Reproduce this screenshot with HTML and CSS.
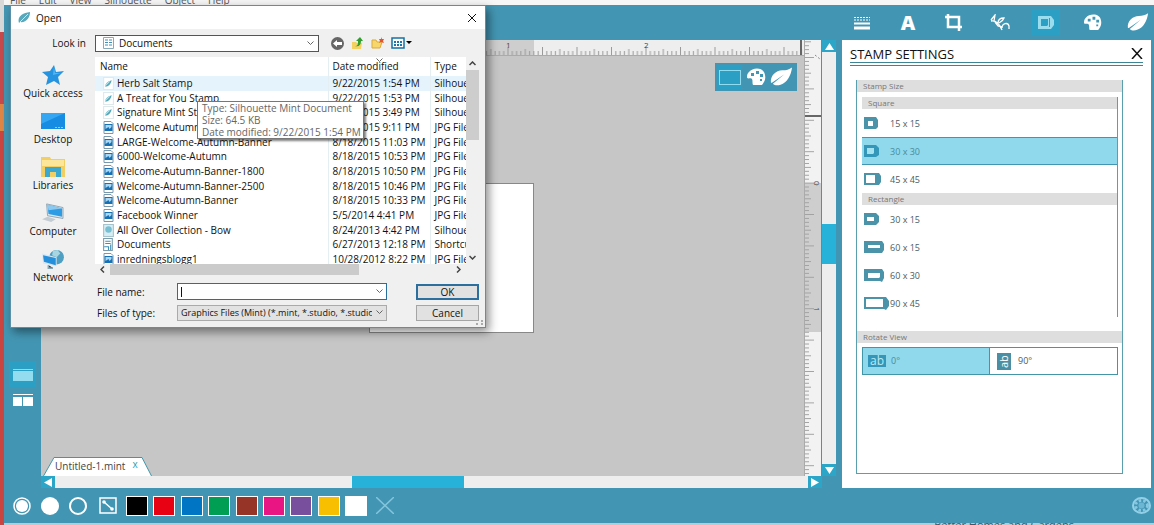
FILE: index.html
```
<!DOCTYPE html>
<html lang="en">
<head>
<meta charset="utf-8">
<title>Silhouette Studio</title>
<link rel="stylesheet" href="styles.css">
</head>
<body>
<svg class="defs" aria-hidden="true">
  <defs>
    <symbol id="leaf" viewBox="0 0 24 20"><path fill="currentColor" d="M1 16C0 9 6 3 13 3c4 0 7-1 10-3-1 8-5 16-12 18-3 1-6 1-8-1L15 7 2 16z"/></symbol>
    <symbol id="palette" viewBox="0 0 20 18"><path fill="currentColor" fill-rule="evenodd" d="M3 4c4-5 15-5 16 3 1 5-1 7-3 10H7c-1-2 0-4-1-6S1 12 1 9s1-4 2-5zm2 1v3h3V5zm5-2v3h3V3zm4 3v3h3V6zm0 5v2h2v-2z"/></symbol>
    <symbol id="picture" viewBox="0 0 10 13"><path fill="#fff" stroke="#7899ad" d="M.5.5h7l2 2v10h-9z"/><path fill="#1670b5" d="M1 3h8v7H1z"/><path fill="#a8d8f5" d="M2 4h6v2L6 8 5 6 2 8z"/></symbol>
    <symbol id="feather" viewBox="0 0 10 12"><path fill="#fff" stroke="#dfe8eb" d="M.5.5h9v11h-9z"/><path fill="#4fa6ba" d="M2 9c0-3 2-5 6-6-1 4-3 6-6 6z"/><path stroke="#b7e3ea" d="M2 8l4-4"/></symbol>
    <pattern id="hticks" width="34.5" height="15" patternUnits="userSpaceOnUse" x="17"><path stroke="#999" d="M.5 7v8M4.800 11v4M9.100 11v4M13.400 11v4M17.800 9v6M22.100 11v4M26.400 11v4M30.700 11v4"/></pattern>
    <pattern id="vticks" width="17" height="31.4" patternUnits="userSpaceOnUse" y="17"><path stroke="#a2a2a2" d="M0 .5h9M0 4.400h4M0 8.400h4M0 12.300h4M0 16.200h6M0 20.100h4M0 24h4M0 27.900h4"/></pattern>
  </defs>
</svg>
<div class="desktop">
  <div class="edge"><span class="edge-top"></span><span class="edge-red"></span><span class="edge-orange"></span><span class="edge-rest"></span></div>
  <div class="app">
    <nav class="menu"><span>File</span><span>Edit</span><span>View</span><span>Silhouette</span><span>Object</span><span>Help</span></nav>
    <header class="toolbar">
      <button class="tool" aria-label="Line style"><svg width="18" height="14" viewBox="0 0 18 14"><path stroke="#fff" stroke-dasharray="2 1" d="M1 1.500h16M1 4h16"/><path stroke="#fff" stroke-width="2" d="M1 7.500h16"/><path stroke="#fff" stroke-width="3" d="M1 12h16"/></svg></button>
      <button class="tool tool-text" aria-label="Text style">A</button>
      <button class="tool" aria-label="Crop"><svg width="20" height="17" viewBox="0 0 20 17"><path fill="none" stroke="#fff" stroke-width="2.500" d="M4 0v13h14M1 3h14v14"/></svg></button>
      <button class="tool" aria-label="Flourish"><svg width="20" height="17" viewBox="0 0 20 17"><path fill="none" stroke="#fff" stroke-width="1.300" d="M1 6l4-5-1 6M1 7c6-1 9 4 11 9M8 9c0-3 2-5 6-5-1 3-3 4-5 5M12 14c0-5 6-6 7-2v3M5 8l3 4 4 1"/></svg></button>
      <button class="tool tool-on" aria-label="Stamp settings"><svg width="16" height="13" viewBox="0 0 16 13"><path fill="#9addef" fill-rule="evenodd" d="M0 0h13l3 4v5l-3 4H0zM3 3v7h6l1-1V3z"/><path stroke="#2c9fc4" d="M11.500 2v9"/></svg></button>
      <button class="tool" aria-label="Colors"><svg width="19" height="17"><use href="#palette"/></svg></button>
      <button class="tool" aria-label="Mint"><svg width="22" height="19"><use href="#leaf"/></svg></button>
    </header>
    <div class="main">
      <aside class="rail">
        <button class="view view-on" aria-label="Single view"><svg width="20" height="13" viewBox="0 0 20 13"><path fill="#93dbef" d="M0 1h20v1H0zM0 3h20v10H0z"/></svg></button>
        <button class="view" aria-label="Split view"><svg width="20" height="12" viewBox="0 0 20 12"><path fill="#fff" d="M0 0h20v1H0zM0 3h9v9H0zM10 3h10v9H10z"/></svg></button>
      </aside>
      <section class="workspace">
        <div class="stage">
          <div class="drawing">
            <svg class="hruler" width="100%" height="15"><path fill="#eee" d="M0 0h2000v15H0z"/><path fill="#cecece" d="M328 0h164v15H328z"/><rect width="100%" height="15" fill="url(#hticks)"/><path stroke="#666" stroke-width="2" d="M759 0v15"/><text x="464" y="8">1</text><text x="602" y="8">2</text></svg>
            <div class="canvas">
              <div class="sheet"></div>
              <div class="quick">
                <button class="quick-box" aria-label="Page"><span></span></button>
                <svg width="20" height="18"><use href="#palette"/></svg>
                <svg width="23" height="20"><use href="#leaf"/></svg>
              </div>
              <div class="tab"><svg width="109" height="20" viewBox="0 0 109 20"><path fill="#fff" stroke="#4396a8" d="M.5 20L11 1.500h88L108.500 20"/></svg><span>Untitled-1.mint</span><button class="tab-close" aria-label="Close tab">x</button></div>
            </div>
          </div>
          <svg class="vruler" width="17" height="100%"><path fill="#f2f2f2" d="M0 0h17v2000H0z"/><path fill="#cecece" d="M0 143h17v149H0z"/><rect width="17" height="100%" fill="url(#vticks)"/><path stroke="#666" stroke-width="2" d="M0 76h17"/><text transform="translate(9 141) rotate(90)">0</text><text transform="translate(9 267) rotate(90)">1</text><path stroke="#888" stroke-dasharray="2 2" d="M10 15l5 4"/></svg>
          <div class="vscroll"><button class="arrow" aria-label="Scroll up"><svg width="9" height="7"><path d="M4.500 0L9 7H0z"/></svg></button><span class="vthumb"></span><button class="arrow" aria-label="Scroll down"><svg width="9" height="7"><path d="M0 0h9L4.500 7z"/></svg></button></div>
        </div>
        <div class="hscroll"><button class="arrow" aria-label="Scroll left"><svg width="8" height="9"><path d="M8 0v9L0 4.500z"/></svg></button><span class="hthumb"></span><button class="arrow" aria-label="Scroll right"><svg width="8" height="9"><path d="M0 0v9l8-4.500z"/></svg></button></div>
      </section>
      <aside class="panel">
        <div class="panel-head"><h1>STAMP SETTINGS</h1><button class="panel-close" aria-label="Close panel"><svg width="12" height="11" viewBox="0 0 12 11"><path stroke="#111" stroke-width="1.500" d="M1 0l10 11M11 0L1 11"/></svg></button></div>
        <div class="settings">
          <h2>Stamp Size</h2>
          <div class="sizes">
            <h3>Square</h3>
            <button class="size"><svg width="26" height="13"><path fill-rule="evenodd" d="M0 0h12l2 3v7l-2 2H0zM4 4v5h5V4z"/></svg>15 x 15</button>
            <button class="size size-on"><svg width="26" height="13"><path fill-rule="evenodd" d="M0 0h12l3 3v7l-3 2H0z"/><path class="hole" d="M3 3h7v5l-1 1H3z"/></svg>30 x 30</button>
            <button class="size"><svg width="26" height="13"><path fill-rule="evenodd" d="M0 0h15l2 3v6l-2 3H0zM2 2v8h9V2z"/></svg>45 x 45</button>
            <h3>Rectangle</h3>
            <button class="size"><svg width="26" height="13"><path fill-rule="evenodd" d="M0 0h12l3 3v6l-3 3H0zM3 4v4h7V4z"/></svg>30 x 15</button>
            <button class="size"><svg width="26" height="13"><path fill-rule="evenodd" d="M0 0h18l2 3v6l-2 3H0zM4 4v3h12V4z"/></svg>60 x 15</button>
            <button class="size"><svg width="26" height="13"><path fill-rule="evenodd" d="M0 0h18l2 3v6l-2 4-2-1H0zM4 4v5h11l1-1V4z"/></svg>60 x 30</button>
            <button class="size"><svg width="26" height="13"><path fill-rule="evenodd" d="M0 0h22l3 4v5l-3 4-2-1H0zM2 2v8h17V2z"/></svg>90 x 45</button>
          </div>
          <h2>Rotate View</h2>
          <div class="rotate">
            <button class="angle angle-on"><span class="ab">ab</span>0°</button>
            <button class="angle"><span class="ab ab-turned">ab</span>90°</button>
          </div>
        </div>
      </aside>
    </div>
    <footer class="bottom">
      <div class="fills">
        <svg width="18" height="18" viewBox="0 0 18 18"><circle cx="9" cy="9" r="8" fill="none" stroke="#fff" stroke-width="1.500"/><circle cx="9" cy="9" r="6" fill="#fff"/></svg>
        <svg width="18" height="18" viewBox="0 0 18 18"><circle cx="9" cy="9" r="9" fill="#fff"/></svg>
        <svg width="18" height="18" viewBox="0 0 18 18"><circle cx="9" cy="9" r="8" fill="none" stroke="#fff" stroke-width="2"/></svg>
      </div>
      <svg class="line-tool" width="18" height="17" viewBox="0 0 18 17"><path fill="none" stroke="#fff" stroke-width="1.500" d="M1 1h16v15H1zM5 5l8 7"/><circle cx="5" cy="5" r="1.800" fill="#fff"/><circle cx="13" cy="12" r="1.800" fill="#fff"/></svg>
      <div class="swatches">
        <button class="swatch black" aria-label="Black"></button><button class="swatch red" aria-label="Red"></button><button class="swatch blue" aria-label="Blue"></button><button class="swatch green" aria-label="Green"></button><button class="swatch brown" aria-label="Brown"></button><button class="swatch pink" aria-label="Pink"></button><button class="swatch purple" aria-label="Purple"></button><button class="swatch yellow" aria-label="Yellow"></button><button class="swatch white" aria-label="White"></button>
      </div>
      <svg class="none" width="18" height="17" viewBox="0 0 18 17"><path stroke="#83c5dc" stroke-width="1.500" d="M0 0l18 17M18 0L0 17"/></svg>
      <button class="gear" aria-label="Preferences"><svg width="19" height="17" viewBox="0 0 19 17"><ellipse cx="9.500" cy="8.500" rx="8.500" ry="7.500" fill="none" stroke="#93d0e8" stroke-width="2"/><ellipse cx="9.500" cy="8.500" rx="6" ry="5" fill="none" stroke="#86c8e2" stroke-width="3" stroke-dasharray="2.500 2"/><circle cx="9.500" cy="8.500" r="3" fill="#6db6d3"/></svg></button>
    </footer>
    <div class="behind"><span>Better Homes and Gardens</span></div>
  </div>
</div>

<section class="dialog" role="dialog" aria-label="Open">
  <header class="title"><svg class="title-icon" width="12" height="12" viewBox="0 0 12 12"><path fill="#58a9bd" d="M1 11C-1 5 4 1 12 0c0 6-4 11-10 10z"/><path stroke="#c4e9f0" d="M2 10l8-8"/></svg><span>Open</span><button class="x" aria-label="Close"><svg width="8" height="8" viewBox="0 0 8 8"><path stroke="#111" d="M0 0l8 8M8 0L0 8"/></svg></button></header>
  <div class="lookin">
    <span class="look-label">Look in</span>
    <button class="combo"><svg width="11" height="12" viewBox="0 0 11 12"><path fill="#fff" stroke="#8aa9b8" d="M.5.5h10v11H.5z"/><path stroke="#3e8fb8" d="M2 3h3M6 3h3M2 5.500h3M6 5.500h3M2 8h3M6 8h3"/></svg><span>Documents</span><svg class="chev" width="7" height="5" viewBox="0 0 7 5"><path d="M.5.5l3 3 3-3"/></svg></button>
    <div class="nav-icons">
      <svg width="13" height="13" viewBox="0 0 13 13"><circle cx="6.500" cy="6.500" r="6.500" fill="#666"/><path fill="#fff" d="M2 6.500L6 3v2h5v3H6v2z"/></svg>
      <svg width="13" height="13" viewBox="0 0 13 13"><path fill="#f5d161" d="M1 5h4l1 1h5l-1 6H1z"/><path fill="#2f9e2c" d="M4 9c3 0 3-2 3-5H5l4-4 3 4h-2c0 4-2 6-6 5z"/></svg>
      <svg width="13" height="13" viewBox="0 0 13 13"><path fill="#f7d66c" stroke="#dba93c" d="M1 11V3h4l1 2h5l-2 6z"/><path fill="#e5532d" d="M10 0l1 2 2 0-1 2 1 2-3-1-2 1 1-2-1-2h2z"/></svg>
      <svg width="21" height="12" viewBox="0 0 21 12"><path fill="#fff" stroke="#1571a4" stroke-width="1.500" d="M1 1h12v10H1z"/><path fill="#1d75a8" d="M3 4h2v2H3zM6 4h2v2H6zM9 4h2v2H9zM3 7h2v2H3zM6 7h2v2H6zM9 7h2v2H9z"/><path d="M15 4h6l-3 3z"/></svg>
    </div>
  </div>
  <div class="body">
    <nav class="places">
      <a class="place" href="#"><svg width="22" height="20" viewBox="0 0 22 20"><path fill="#2593df" d="M12 0l2 7 8-1-6 6 2 8-6-4-8 4 2-8-6-5 8-1z"/><path fill="#56b5f0" d="M12 2l1 6 6 0-8 2z"/></svg><span>Quick access</span></a>
      <a class="place" href="#"><svg width="24" height="20" viewBox="0 0 24 20"><path fill="#168de2" d="M0 2h24v16H0z"/><path fill="#35a7f2" d="M0 2h24L0 13z"/><path stroke="#8bcdf6" stroke-dasharray="2 1" d="M14 16.500h9"/></svg><span>Desktop</span></a>
      <a class="place" href="#"><svg width="24" height="20" viewBox="0 0 24 20"><path fill="#f1cf64" d="M0 0h9l1 2h14v18H0z"/><path fill="#fbe69a" d="M1 3h22v6H1z"/><path fill="#3ba9cf" d="M4 10h16v10h-5v-5H9v5H4z"/></svg><span>Libraries</span></a>
      <a class="place" href="#"><svg width="24" height="22" viewBox="0 0 24 22"><path fill="#dceaf2" stroke="#8ba0ad" d="M5 1l18 4v12L6 14z"/><path fill="#2d9ce5" d="M6 2l16 4v9L7 12z"/><path fill="#8dc9ef" d="M6 2l16 4L7 8z"/><path fill="#c3ccd2" d="M0 18l6-3 9 3-5 3z"/></svg><span>Computer</span></a>
      <a class="place" href="#"><svg width="24" height="22" viewBox="0 0 24 22"><circle cx="16" cy="9" r="8" fill="#4f9fc2"/><path fill="#a8d5df" d="M12 2l5-1 3 4-4 4-5-2z"/><path fill="#d4e7f3" d="M0 5l16 4v10L1 16z"/><path fill="#268fdc" d="M1 7l14 3v8L2 14z"/><path stroke="#87a6b6" stroke-width="2" d="M7 18v3l5 0"/></svg><span>Network</span></a>
    </nav>
    <div class="content">
      <div class="browser">
        <div class="list">
          <table>
            <colgroup><col class="c-name"><col class="c-date"><col class="c-type"></colgroup>
            <thead><tr><th>Name</th><th>Date modified</th><th>Type</th></tr></thead>
            <tbody>
              <tr class="hot"><td><svg><use href="#feather"/></svg>Herb Salt Stamp</td><td>9/22/2015 1:54 PM</td><td>Silhouette</td></tr>
              <tr><td><svg><use href="#feather"/></svg>A Treat for You Stamp</td><td>9/22/2015 1:53 PM</td><td>Silhouette</td></tr>
              <tr><td><svg><use href="#feather"/></svg>Signature Mint Stamp</td><td>9/22/2015 3:49 PM</td><td>Silhouette</td></tr>
              <tr><td><svg><use href="#picture"/></svg>Welcome Autumn</td><td>8/18/2015 9:11 PM</td><td>JPG File</td></tr>
              <tr><td><svg><use href="#picture"/></svg>LARGE-Welcome-Autumn-Banner</td><td>8/18/2015 11:03 PM</td><td>JPG File</td></tr>
              <tr><td><svg><use href="#picture"/></svg>6000-Welcome-Autumn</td><td>8/18/2015 10:53 PM</td><td>JPG File</td></tr>
              <tr><td><svg><use href="#picture"/></svg>Welcome-Autumn-Banner-1800</td><td>8/18/2015 10:50 PM</td><td>JPG File</td></tr>
              <tr><td><svg><use href="#picture"/></svg>Welcome-Autumn-Banner-2500</td><td>8/18/2015 10:46 PM</td><td>JPG File</td></tr>
              <tr><td><svg><use href="#picture"/></svg>Welcome-Autumn-Banner</td><td>8/18/2015 10:33 PM</td><td>JPG File</td></tr>
              <tr><td><svg><use href="#picture"/></svg>Facebook Winner</td><td>5/5/2014 4:41 PM</td><td>JPG File</td></tr>
              <tr><td><svg viewBox="0 0 10 12"><path fill="#d8edf3" stroke="#a4c3cd" d="M.5.5h9v11h-9z"/><circle cx="5" cy="5" r="3" fill="#77bfd2"/></svg>All Over Collection - Bow</td><td>8/24/2013 4:42 PM</td><td>Silhouette</td></tr>
              <tr><td><svg viewBox="0 0 10 12"><path fill="#fff" stroke="#7b9bad" d="M.5.5h8v11h-8z"/><path fill="none" stroke="#3e8fb8" d="M2 3h5M2 5h5M1 8h4v3M7 6v5"/></svg>Documents</td><td>6/27/2013 12:18 PM</td><td>Shortcut</td></tr>
              <tr><td><svg><use href="#picture"/></svg>inredningsblogg1</td><td>10/28/2012 8:22 PM</td><td>JPG File</td></tr>
            </tbody>
          </table>
          <svg class="sort" width="7" height="4" viewBox="0 0 7 4"><path d="M.5.5l3 3 3-3"/></svg>
        </div>
        <div class="list-v"><svg width="7" height="5" viewBox="0 0 7 5"><path d="M.5 4l3-3 3 3"/></svg><span></span><svg width="7" height="5" viewBox="0 0 7 5"><path d="M.5 1l3 3 3-3"/></svg></div>
      </div>
      <div class="list-h"><svg width="5" height="7" viewBox="0 0 5 7"><path d="M4 .5l-3 3 3 3"/></svg><span></span><svg width="5" height="7" viewBox="0 0 5 7"><path d="M1 .5l3 3-3 3"/></svg></div>
      <form class="form">
        <label for="fname">File name:</label>
        <div class="field"><input id="fname" type="text" value=""><i class="caret"></i><svg class="chev" width="7" height="5" viewBox="0 0 7 5"><path d="M.5.5l3 3 3-3"/></svg></div>
        <button type="button" class="btn ok">OK</button>
        <label for="ftype">Files of type:</label>
        <div class="field"><select id="ftype"><option>Graphics Files (Mint) (*.mint, *.studio, *.studio3, *.gsd)</option></select><svg class="chev" width="7" height="5" viewBox="0 0 7 5"><path d="M.5.5l3 3 3-3"/></svg></div>
        <button type="button" class="btn">Cancel</button>
      </form>
    </div>
  </div>
  <div class="grip"></div>
  <div class="tip" role="tooltip">Type: Silhouette Mint Document<br>Size: 64.5 KB<br>Date modified: 9/22/2015 1:54 PM</div>
</section>
</body>
</html>
```
FILE: styles.css
```
* { box-sizing: border-box; }
body { margin: 0; font: 10px/12px "Open Sans", "Noto Sans", sans-serif; color: #111; overflow: hidden; }
button { margin: 0; padding: 0; border: 0; background: none; font: inherit; color: inherit; }
h1, h2, h3 { margin: 0; font-weight: 400; }
svg { display: block; flex: none; }
.defs { position: absolute; width: 0; height: 0; }

.desktop { display: flex; height: 100vh; background: #e8edf0; }
.edge { display: flex; flex-direction: column; width: 4px; }
.edge-top { height: 32px; background: #d8d8d8; }
.edge-red { height: 72px; background: #c44a4c; }
.edge-orange { height: 27px; background: #dd8544; }
.edge-rest { flex: 1; background: #c94541; }
.app { flex: 1; min-width: 0; display: flex; flex-direction: column; background: #4396b3; }

.menu { display: flex; align-items: flex-end; gap: 13px; height: 5px; padding-left: 6px; background: #f6f6f6; overflow: hidden; color: #555; font-size: 10px; line-height: 9px; }
.toolbar { display: flex; justify-content: flex-end; align-items: center; gap: 18px; height: 35px; padding-right: 2px; color: #fff; }
.tool { display: flex; align-items: center; justify-content: center; width: 28px; height: 25px; }
.tool-text { font-size: 20px; font-weight: 800; line-height: 24px; }
.tool-on { background: #2c9fc4; }

.main { flex: 1; min-height: 0; display: flex; padding-right: 3px; }
.rail { display: flex; flex-direction: column; align-items: center; width: 37px; padding-top: 322px; }
.view { display: flex; align-items: center; justify-content: center; width: 27px; height: 25px; }
.view-on { background: #2c9fc4; }
.workspace { flex: 1; min-width: 0; display: flex; flex-direction: column; }
.stage { flex: 1; min-height: 0; display: flex; }
.drawing { flex: 1; min-width: 0; display: flex; flex-direction: column; background: #c6c6c6; border-left: 1px solid #a9d2df; }
.hruler text, .vruler text { font-size: 8px; fill: #444; }
.canvas { flex: 1; position: relative; border-top: 1px solid #aaa; overflow: hidden; }
.vruler { border-left: 1px solid #aaa; }
.sheet { position: absolute; left: 327px; top: 127px; width: 165px; height: 150px; background: #fff; border: 1px solid #888; }
.quick { position: absolute; right: 7px; top: 7px; display: flex; align-items: center; gap: 4px; height: 28px; padding: 0 4px 0 3px; background: #4396b3; color: #fff; }
.quick-box { display: flex; align-items: center; justify-content: center; width: 24px; height: 24px; background: #2c9fc4; }
.quick-box span { width: 22px; height: 15px; border: 1px solid #93dbef; }
.tab { position: absolute; left: 1px; bottom: 0; display: flex; align-items: center; width: 109px; height: 20px; padding-left: 12px; color: #444; }
.tab svg { position: absolute; left: 0; top: 0; }
.tab span { position: relative; }
.tab-close { position: relative; margin-left: 7px; line-height: 8px; padding-bottom: 4px; color: #2c9fb4; }
.vscroll { display: flex; flex-direction: column; justify-content: space-between; width: 15px; margin-right: 6px; background: #eee; border-left: 1px solid #4396b3; }
.hscroll { display: flex; justify-content: space-between; height: 12px; margin-right: 20px; background: #eee; }
.arrow { display: flex; align-items: center; justify-content: center; width: 14px; height: 12px; background: #2ba6c9; }
.arrow path { fill: #fff; }
.vthumb { height: 40px; margin-bottom: 28px; background: #27b2da; }
.hthumb { width: 112px; margin-right: 48px; background: #27b2da; }

.panel { display: flex; flex-direction: column; width: 309px; padding: 5px 8px 14px; background: #fff; }
.panel-head { display: flex; align-items: center; justify-content: space-between; height: 21px; border-bottom: 4px double #3f8494; }
.panel-head h1 { font-size: 13px; line-height: 16px; color: #111; }
.settings { flex: 1; width: 267px; margin: 14px 0 0 6px; border: 1px solid #5a9fae; border-top: 0; color: #68777c; }
.settings h2, .settings h3 { font-size: 8px; line-height: 12px; height: 12px; padding-left: 6px; background: #dedede; color: #777; }
.sizes { margin: 5px 4px 14px 5px; border-right: 1px solid #5a9fae; }
.size { display: flex; align-items: center; width: 100%; height: 28px; padding: 1px 0 0 2px; font-size: 9px; font-weight: 500; color: #4c5b61; }
.size svg { fill: #4a93a8; }
.size-on { background: #90d8eb; border-top: 1px solid #4396b3; border-bottom: 1px solid #4396b3; color: #478ca0; }
.size-on svg { fill: #3497b9; }
.hole { fill: #a5e2f1; }
.rotate { display: grid; grid-template-columns: 1fr 1fr; height: 28px; margin: 4px 4px 0 5px; border: 1px solid #4396a8; }
.angle { display: flex; align-items: center; gap: 5px; padding-left: 5px; font-size: 9px; font-weight: 500; color: #4c5b61; }
.angle-on { background: #90d8eb; border-right: 1px solid #4396a8; color: #478ca0; }
.ab { display: flex; align-items: center; justify-content: center; width: 18px; height: 12px; background: #3497b9; color: #b9ecf7; font-size: 12px; line-height: 12px; }
.ab-turned { width: 14px; height: 17px; margin: 0 2px; writing-mode: vertical-rl; transform: rotate(180deg); background: #4a8fa3; color: #fff; font-size: 11px; }

.bottom { display: flex; align-items: center; height: 35px; padding: 0 3px 0 9px; }
.fills { display: flex; gap: 10px; }
.line-tool { margin-left: 12px; }
.swatches { display: flex; justify-content: space-between; width: 241px; margin: 0 9px; }
.swatch { width: 22px; height: 20px; border: 1px solid #fff; }
.black { background: #000; }
.red { background: #e80013; }
.blue { background: #0075c4; }
.green { background: #009e53; }
.brown { background: #963427; }
.pink { background: #e81583; }
.purple { background: #774f9c; }
.yellow { background: #f8be00; }
.white { background: #fff; }
.gear { margin-left: auto; }
.behind { display: flex; justify-content: flex-end; height: 2px; padding-right: 80px; background: #b5ccd5; color: #456; overflow: hidden; font-size: 11px; line-height: 4px; }

.dialog { position: absolute; left: 10px; top: 5px; width: 476px; background: #f0f0f0; border: 1px solid #5c8fa8; box-shadow: 3px 4px 9px rgba(0, 0, 0, .45); }
.title { display: flex; align-items: center; gap: 6px; height: 23px; padding: 0 9px 0 7px; background: #fff; }
.x { margin-left: auto; }
.lookin { display: flex; align-items: center; height: 28px; }
.look-label { width: 84px; padding-right: 9px; text-align: right; }
.combo { display: flex; align-items: center; gap: 5px; width: 224px; height: 17px; padding: 0 4px 0 7px; background: #fff; border: 1px solid #555; }
.chev { margin-left: auto; }
.chev path, .sort path { fill: none; stroke: #666; }
.nav-icons { display: flex; align-items: center; gap: 7px; padding-left: 12px; }
.body { display: flex; padding-bottom: 6px; }
.places { display: flex; flex-direction: column; gap: 12px; width: 84px; padding-top: 8px; }
.place { display: flex; flex-direction: column; align-items: center; gap: 2px; height: 34px; color: inherit; text-decoration: none; }
.place svg { height: 20px; }
.content { width: 384px; }
.browser { display: flex; height: 207px; }
.list { position: relative; width: 371px; background: #fff; overflow: hidden; }
.list table { width: 371px; height: 210px; table-layout: fixed; border-collapse: collapse; white-space: nowrap; }
.c-name { width: 233px; }
.c-date { width: 102px; }
.c-type { width: 36px; }
.list th, .list td { padding: 0 0 0 5px; text-align: left; font-weight: 400; line-height: 13px; overflow: hidden; }
.list th { height: 19px; }
.list th + th, .list td + td { padding-left: 4px; border-left: 1px solid #e4eef3; }
.list td svg { float: left; width: 11px; height: 13px; margin: 0 3px; }
.hot { background: #e5f3fd; }
.sort { position: absolute; left: 281px; top: 1px; }
.list-v { display: flex; flex-direction: column; align-items: center; width: 13px; padding: 4px 0; }
.list-v span { width: 13px; height: 70px; margin: 4px 0 auto; background: #cdcdcd; }
.list-v path, .list-h path { fill: none; stroke: #444; stroke-width: 1.5px; }
.list-h { display: flex; align-items: center; height: 11px; padding: 0 18px 0 5px; }
.list-h span { width: 249px; height: 11px; margin: 0 auto 0 5px; background: #cbcbcb; }
.form { display: grid; grid-template-columns: 82px 210px 1fr; grid-auto-rows: 17px; row-gap: 4px; align-items: center; padding-top: 8px; }
.form label { padding-left: 2px; }
.field { position: relative; display: flex; align-items: center; height: 17px; }
.field .chev { position: absolute; right: 4px; top: 6px; }
.field input, .field select { width: 100%; height: 17px; margin: 0; padding: 0 14px 0 3px; border: 1px solid #2a6f9b; border-radius: 0; background: #fff; font: inherit; color: inherit; outline: 0; appearance: none; }
.field select { height: 16px; border-color: #aaa; background: #e2e2e2; font-size: 9px; }
.caret { position: absolute; left: 4px; top: 4px; width: 1px; height: 10px; background: #111; }
.btn { justify-self: end; width: 63px; height: 16px; background: #e1e1e1; border: 1px solid #a5a5a5; line-height: 12px; }
.ok { border: 2px solid #2c6f9c; }
.grip { position: absolute; right: 2px; bottom: 2px; width: 7px; height: 5px; border-right: 2px dotted #aaa; border-bottom: 2px dotted #aaa; }
.tip { position: absolute; left: 186px; top: 95px; padding: 0 2px 0 4px; background: #fff; border: 1px solid #777; box-shadow: 2px 2px 2px rgba(0, 0, 0, .5); color: #666; white-space: nowrap; }
```
